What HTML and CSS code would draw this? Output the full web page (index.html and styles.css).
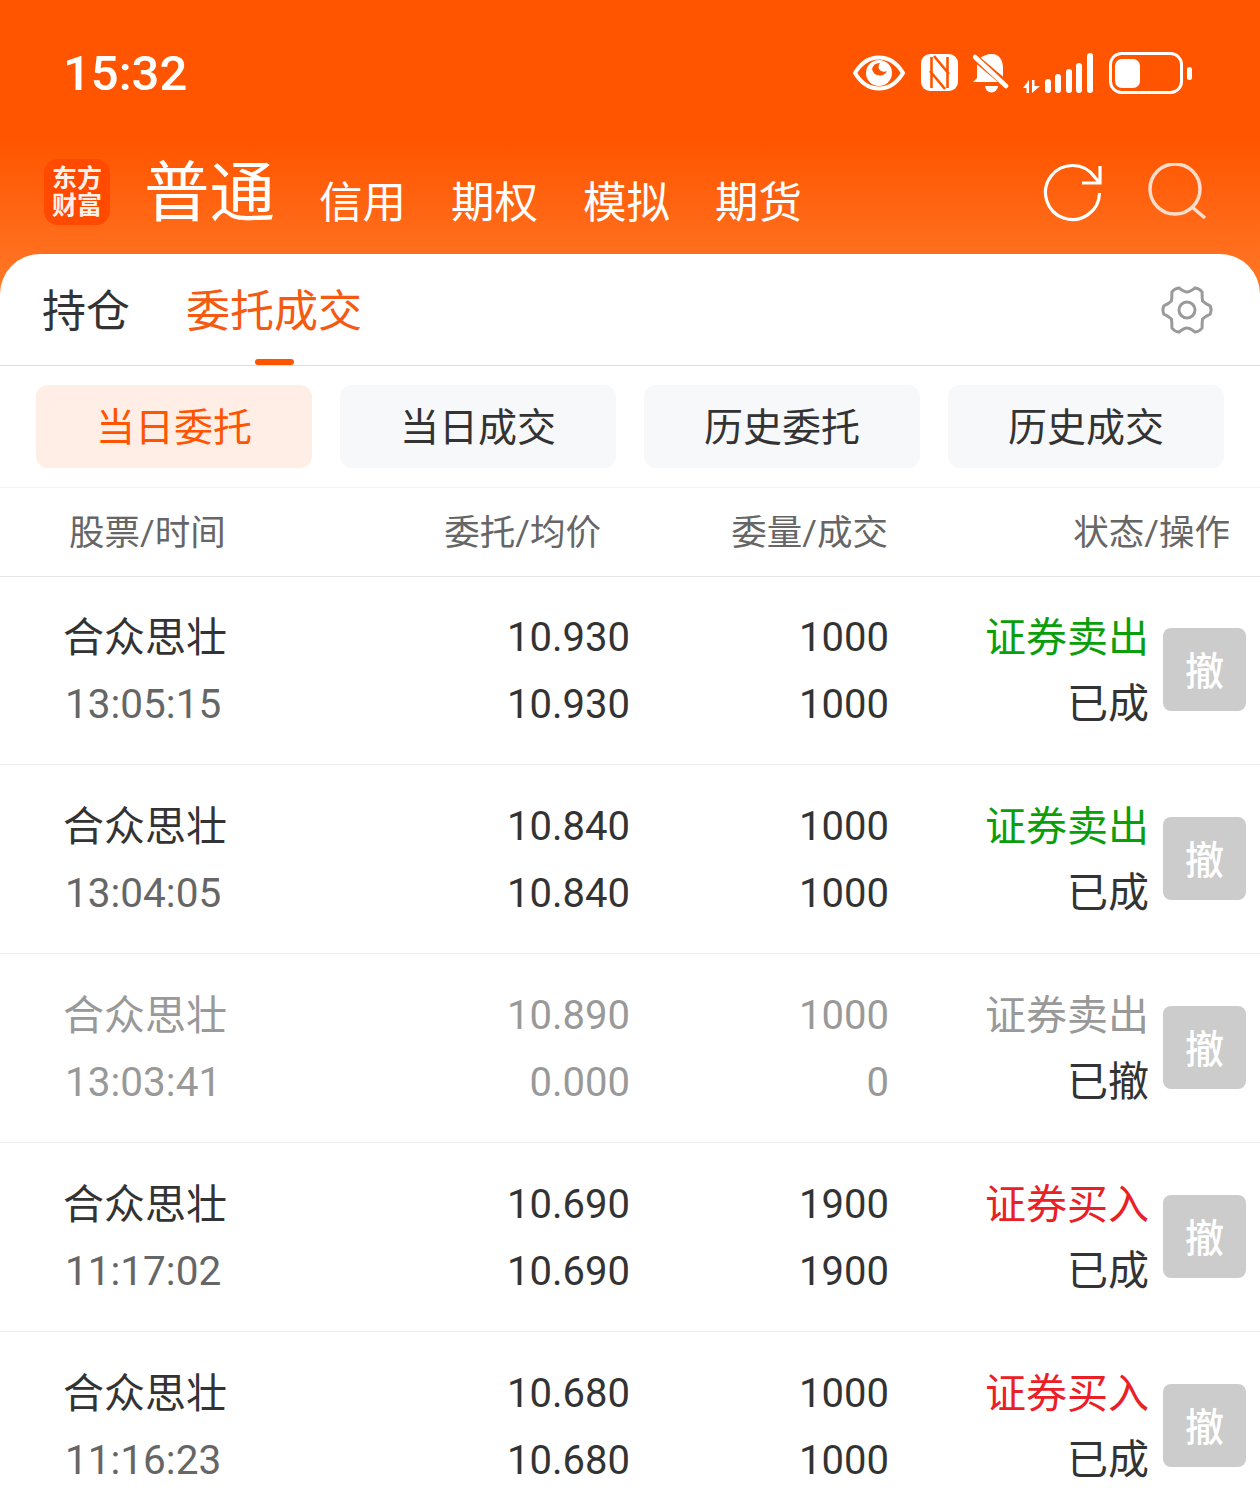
FILE: index.html
```html
<!DOCTYPE html>
<html lang="zh-CN">
<head>
<meta charset="utf-8">
<title>委托成交</title>
<link rel="stylesheet" href="styles.css">
</head>
<body>
<div class="page">
  <header class="top">
    <div class="status">
      <span class="clock">15:32</span>
      <div class="status-icons">
        <svg width="52" height="36" viewBox="0 0 52 36"><path d="M2 18C8 8 16 2.500 26 2.500S44 8 50 18C44 28 36 33.500 26 33.500S8 28 2 18Z" fill="none" stroke="#fff" stroke-width="4" stroke-linejoin="round"/><circle cx="26" cy="18" r="13" fill="#fff"/><path d="M19 14a8 8 0 0 1 8-6 6 6 0 0 0-1 6 6 6 0 0 0 8 2 8 8 0 0 1-15-2Z" fill="#ff5500"/></svg>
        <svg width="37" height="37" viewBox="0 0 37 37"><rect width="37" height="37" rx="9" fill="#fff"/><path d="M10.500 3V34M26.500 3V34M13 2L28 20M9 17L24 35" fill="none" stroke="#ff5500" stroke-width="2.600"/></svg>
        <svg class="ic-bell" width="36" height="41" viewBox="0 0 36 41"><path d="M19 2c7 0 11 6 11 14v10l4 4H0l4-4V14c0-3 1-5 2-7 3-3 8-5 13-5Z" fill="#fff"/><path d="M12 34h13a6.500 6.500 0 0 1-13 0Z" fill="#fff"/><path d="M0 4L34 33" stroke="#ff5500" stroke-width="7.500"/><path d="M2 5L33 34" stroke="#fff" stroke-width="4.500" stroke-linecap="round"/></svg>
        <svg class="ic-signal" width="70" height="40" viewBox="0 0 70 40"><path d="M0 35L6 27V40H3.500V35ZM9 27H11.500V33H17L9 40Z" fill="#fff"/><rect x="22" y="26" width="6" height="14" rx="3" fill="#fff"/><rect x="32" y="21" width="6" height="19" rx="3" fill="#fff"/><rect x="43" y="16" width="6" height="24" rx="3" fill="#fff"/><rect x="53" y="10" width="6" height="30" rx="3" fill="#fff"/><rect x="64" y="0" width="6" height="40" rx="3" fill="#fff"/></svg>
        <svg width="84" height="42" viewBox="0 0 84 42"><rect x="1.500" y="1.500" width="71" height="39" rx="11" fill="none" stroke="#fff" stroke-width="3"/><rect x="6" y="7" width="25" height="29" rx="7" fill="#fff"/><rect x="78" y="15" width="5" height="13" rx="2.500" fill="#fff"/></svg>
      </div>
    </div>
    <nav class="nav">
      <div class="logo"><span>东方</span><span>财富</span></div>
      <span class="nav-main">普通</span>
      <div class="nav-items"><span>信用</span><span>期权</span><span>模拟</span><span>期货</span></div>
      <div class="nav-tools">
        <svg width="60" height="60" viewBox="0 0 60 60"><path d="M56.500 30A27 27 0 1 1 51.600 14L57 20" fill="none" stroke="#fff" stroke-width="3.200"/><path d="M39 20H57V3" fill="none" stroke="#fff" stroke-width="3.200"/></svg>
        <svg class="tool-search" width="60" height="60" viewBox="0 0 60 60"><circle cx="28" cy="26" r="25" fill="none" stroke="#fff" stroke-width="3.500"/><path d="M45 44L58 55" stroke="#fff" stroke-width="3.500"/></svg>
      </div>
    </nav>
  </header>
  <main class="card">
    <div class="tabs">
      <span class="tab">持仓</span>
      <span class="tab tab-on">委托成交</span>
      <svg class="gear" width="52" height="50" viewBox="-26 -25 52 50"><path d="M23.140-4.080Q25 0 23.140 4.080Q18 6.500 15.600 9Q15 12 15.100 18Q12.500 21.650 8.040 22.080Q3 18 0 18Q-3 18-8.040 22.080Q-12.500 21.650-15.100 18Q-15 12-15.600 9Q-18 6.500-23.140 4.080Q-25 0-23.140-4.080Q-18-6.500-15.600-9Q-15-12-15.100-18Q-12.500-21.650-8.040-22.080Q-3-18 0-18Q3-18 8.040-22.080Q12.500-21.650 15.100-18Q15-12 15.600-9Q18-6.500 23.140-4.080Z" fill="none" stroke="#9a9a9a" stroke-width="3"/><circle r="8" fill="none" stroke="#9a9a9a" stroke-width="3"/></svg>
    </div>
    <div class="subtabs">
      <span class="sub sub-on">当日委托</span>
      <span class="sub">当日成交</span>
      <span class="sub">历史委托</span>
      <span class="sub">历史成交</span>
    </div>
    <div class="head">
      <span class="h1">股票/时间</span>
      <span class="h2">委托/均价</span>
      <span class="h3">委量/成交</span>
      <span class="h4">状态/操作</span>
    </div>
    <div class="row">
      <div class="c1"><b>合众思壮</b><i>13:05:15</i></div>
      <div class="c2"><b>10.930</b><b>10.930</b></div>
      <div class="c3"><b>1000</b><b>1000</b></div>
      <div class="c4"><b class="sell">证券卖出</b><b>已成</b></div>
      <span class="undo">撤</span>
    </div>
    <div class="row">
      <div class="c1"><b>合众思壮</b><i>13:04:05</i></div>
      <div class="c2"><b>10.840</b><b>10.840</b></div>
      <div class="c3"><b>1000</b><b>1000</b></div>
      <div class="c4"><b class="sell">证券卖出</b><b>已成</b></div>
      <span class="undo">撤</span>
    </div>
    <div class="row row-off">
      <div class="c1"><b>合众思壮</b><i>13:03:41</i></div>
      <div class="c2"><b>10.890</b><b>0.000</b></div>
      <div class="c3"><b>1000</b><b>0</b></div>
      <div class="c4"><b>证券卖出</b><b class="keep">已撤</b></div>
      <span class="undo">撤</span>
    </div>
    <div class="row">
      <div class="c1"><b>合众思壮</b><i>11:17:02</i></div>
      <div class="c2"><b>10.690</b><b>10.690</b></div>
      <div class="c3"><b>1900</b><b>1900</b></div>
      <div class="c4"><b class="buy">证券买入</b><b>已成</b></div>
      <span class="undo">撤</span>
    </div>
    <div class="row">
      <div class="c1"><b>合众思壮</b><i>11:16:23</i></div>
      <div class="c2"><b>10.680</b><b>10.680</b></div>
      <div class="c3"><b>1000</b><b>1000</b></div>
      <div class="c4"><b class="buy">证券买入</b><b>已成</b></div>
      <span class="undo">撤</span>
    </div>
  </main>
</div>
</body>
</html>
```
FILE: styles.css
```css
* { box-sizing: border-box; }
html, body { margin: 0; padding: 0; }
body { font-family: Roboto, "Noto Sans CJK SC", sans-serif; color: #333; background: #fff; }
.page {
  width: 1260px; height: 1500px; overflow: hidden;
  background: linear-gradient(#ff5500 0, #ff5500 140px, #ff7a2a 300px, #ff7a2a 100%);
}
.top { height: 254px; color: #fff; }
.status { height: 145px; display: flex; align-items: center; justify-content: space-between; padding: 2px 67px 0 63px; }
.clock { font-size: 49px; line-height: 1; font-weight: 500; }
.status-icons { display: flex; align-items: center; gap: 16px; margin-top: -2px; }
.ic-bell { margin: 0 -2px 0 -1px; }
.ic-signal { margin-top: 1px; }
.nav { height: 109px; display: flex; align-items: flex-start; padding: 14px 53px 0 44px; }
.logo {
  width: 66px; height: 66px; border-radius: 14px; background: #ff4a00;
  display: flex; flex-direction: column; align-items: center; justify-content: center;
  font-size: 25px; line-height: 27px; font-weight: 700; color: #fff1e8;
}
.nav-main { margin-left: 34px; font-size: 65.500px; line-height: 66px; margin-top: 2px; }
.nav-items { display: flex; gap: 45px; margin-left: 44px; font-size: 43.500px; line-height: 50px; margin-top: 20px; color: #fff; }
.nav-tools { margin-left: auto; display: flex; gap: 44px; align-items: center; margin-top: 4px; }
.tool-search { opacity: .78; }
.card { background: #fff; border-radius: 40px 40px 0 0; height: 1246px; }
.tabs { height: 112px; display: flex; align-items: center; padding: 4px 47px 0 42px; border-bottom: 1px solid #dedede; position: relative; }
.tab { font-size: 44px; line-height: 60px; margin-right: 56px; color: #333; }
.tab-on { color: #f55a12; }
.tab-on::after { content: ""; position: absolute; left: 255px; bottom: 0; width: 39px; height: 6px; border-radius: 3px; background: #ff5500; }
.gear { margin-left: auto; margin-top: -4px; }
.subtabs { height: 122px; display: flex; gap: 28px; padding: 19px 36px 0; border-bottom: 1px solid #f3f3f3; }
.sub { width: 276px; height: 83px; padding-bottom: 5px; border-radius: 12px; background: #f7f8fa; display: flex; align-items: center; justify-content: center; font-size: 39px; color: #333; }
.sub-on { background: #ffeee6; color: #ff5500; }
.head { height: 89px; display: flex; align-items: center; padding: 0 0 5px 69px; font-size: 35.500px; color: #666; border-bottom: 1px solid #e8e8e8; }
.h1 { width: 331px; }
.h2 { width: 201px; text-align: right; }
.h3 { width: 287px; text-align: right; }
.h4 { width: 342px; text-align: right; }
.row { height: 189px; display: flex; align-items: flex-start; padding: 28px 0 0 63px; border-bottom: 1px solid #eee; font-size: 41px; }
.head + .row { height: 188px; padding-top: 27px; }
.row b, .row i { display: block; font-weight: 400; font-style: normal; line-height: 67px; color: #333; }
.row i { color: #666; font-size: 40.500px; padding-left: 2px; }
.c1 b, .c4 b:first-child { padding-top: 1px; margin-bottom: -1px; }
.c1 { width: 337px; }
.c2 { width: 230px; text-align: right; font-size: 40px; }
.c3 { width: 259px; text-align: right; font-size: 40px; }
.c4 { width: 260px; text-align: right; }
.row .sell { color: #0a9e0a; }
.row .buy { color: #ea2027; }
.row-off b, .row-off i { color: #999; }
.row-off .keep { color: #333; }
.undo { width: 83px; height: 83px; margin: 24px 0 0 14px; padding-bottom: 4px; border-radius: 8px; background: #ccc; color: #fff; font-size: 39px; font-weight: 500; display: flex; align-items: center; justify-content: center; }
```
